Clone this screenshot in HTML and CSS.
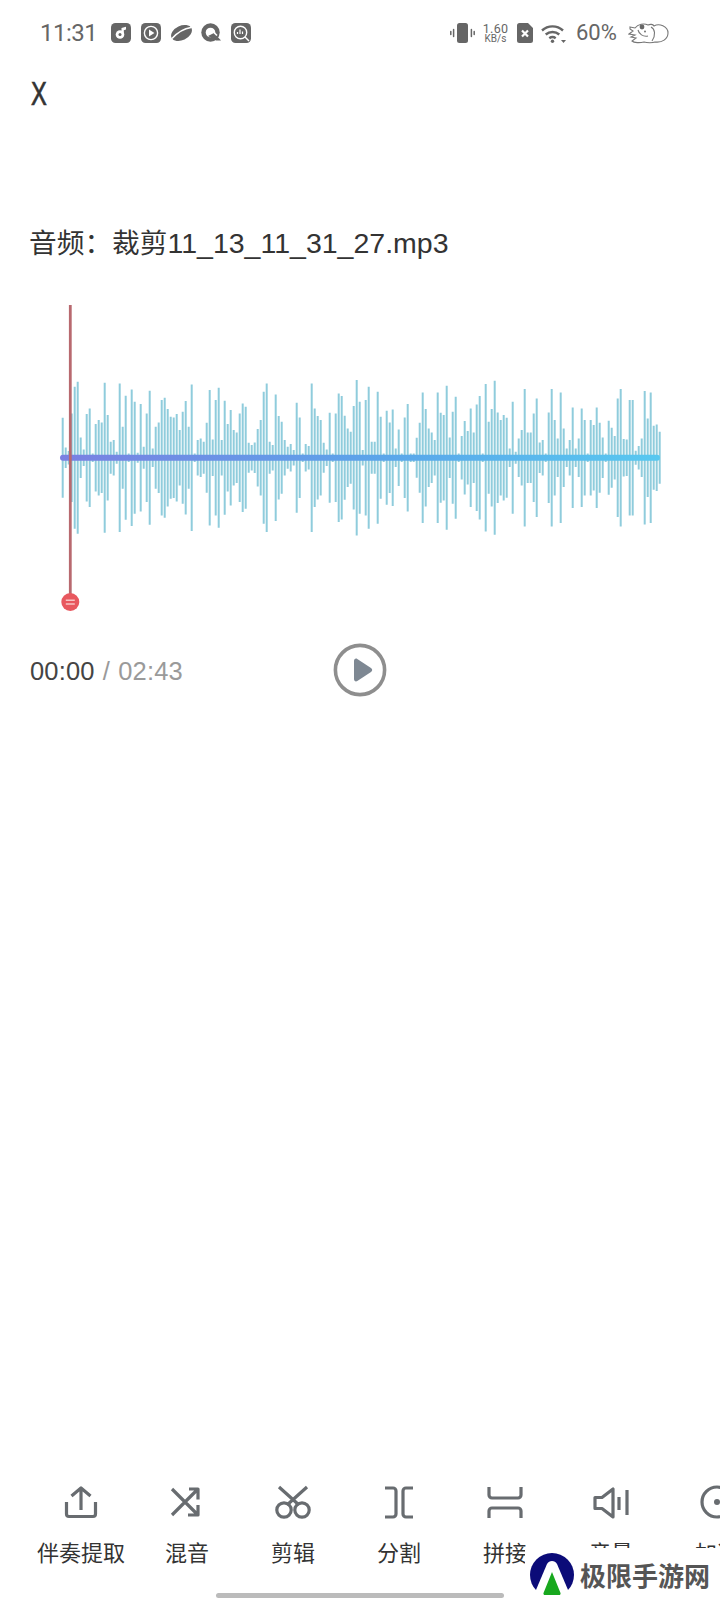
FILE: index.html
```html
<!DOCTYPE html>
<html lang="zh">
<head>
<meta charset="utf-8">
<title>音频</title>
<link rel="stylesheet" href="styles.css">
</head>
<body>
<div class="page">
  <header class="status">
    <div class="status-group">
      <span class="clock">11:31</span>
      <div class="app-icons">
        <svg class="app" viewBox="0 0 20 20"><rect width="20" height="20" rx="4.5" class="ink"/><circle cx="9" cy="11.5" r="4.300" class="cut"/><circle cx="9" cy="11.500" r="1.500" class="ink"/><path d="M10.500 8.500V5l4.500-1.200v2.800l-2.200.6v3z" class="cut"/></svg>
        <svg class="app" viewBox="0 0 20 20"><rect width="20" height="20" rx="4.5" class="ink"/><circle cx="10" cy="10" r="6.6" class="ring"/><path d="M8 6.6v6.8l5.4-3.4z" class="cut"/></svg>
        <svg class="app app-wide" viewBox="0 0 21 20"><ellipse cx="10.5" cy="10" rx="11" ry="7.200" transform="rotate(-25 10.5 10)" class="ink"/><path d="M1 15.500C7 9 13 5.500 20 4.500" class="slash"/></svg>
        <svg class="app" viewBox="0 0 20 20"><circle cx="9.5" cy="9.5" r="9.2" class="ink"/><circle cx="9.5" cy="9.5" r="4.8" class="cut"/><path d="M7 13l6-3 7 7.5h-5z" class="ink"/><path d="M12 8.5l4 4" class="slash"/></svg>
        <svg class="app" viewBox="0 0 20 20"><rect width="20" height="20" rx="4.5" class="ink"/><circle cx="9.5" cy="9.5" r="6.2" class="ring"/><path d="M14 14l4 4" class="ring"/><path d="M6.5 11V9M9 11V6.5M11.5 11V8.5" class="thin"/></svg>
      </div>
    </div>
    <div class="status-group status-right">
      <svg class="vibrate" viewBox="0 0 25 20"><rect x="7" width="11" height="20" rx="2.5" class="ink"/><path d="M3.6 6.5v7M.8 8.5v3M21.4 6.5v7M24.2 8.5v3" class="stroke"/></svg>
      <div class="speed"><span class="speed-num">1.60</span><span class="speed-unit">KB/s</span></div>
      <svg class="sim" viewBox="0 0 16 20"><path d="M2.5 0H11l5 5v12.5a2.500 2.500 0 0 1-2.500 2.500h-11A2.500 2.500 0 0 1 0 17.500v-15A2.500 2.500 0 0 1 2.500 0z" class="ink"/><path d="M5 7.500l6 6M11 7.500l-6 6" class="sim-x"/></svg>
      <svg class="wifi" viewBox="0 0 25 19"><path d="M1 6.500C7 1 16 1 22 6.500" class="wave-arc"/><path d="M4.700 10.500c4-3.400 9.600-3.400 13.600 0" class="wave-arc"/><path d="M8.300 14.200c2-1.500 4.400-1.500 6.400 0" class="wave-arc"/><circle cx="11.500" cy="17.300" r="1.700" class="ink"/><path d="M20 16h5l-2.500 3z" class="ink"/></svg>
      <span class="battery">60%</span>
      <svg class="mascot" viewBox="0 0 41 22"><path d="M2 5l5 1C10 2 16 1 20 3c2-1 5-1 6 1 5-3 14 0 14 7 0 6-6 10-13 9-2 1-8 1-11 0-4 1-10 1-12-1l4-3-5-1 4-2-6-1 4-3-3-2z" class="sketch"/><path d="M23 5c4 2 5 8 1 14M10 8c1 4 5 7 10 6" class="sketch"/><circle cx="14" cy="5" r="2.400" class="ink"/><circle cx="17" cy="9.500" r=".9" class="ink"/></svg>
    </div>
  </header>

  <div class="topbar"><span class="close">X</span></div>

  <h1 class="title">音频：裁剪<span class="title-latin">11_13_11_31_27.mp3</span></h1>

  <svg class="wave" viewBox="0 300 720 320">
    <defs>
      <linearGradient id="axis" x1="60" x2="660" y1="0" y2="0" gradientUnits="userSpaceOnUse">
        <stop offset="0" stop-color="#7a80e2"/>
        <stop offset=".55" stop-color="#5aa6ea"/>
        <stop offset="1" stop-color="#58c8f0"/>
      </linearGradient>
    </defs>
    <path id="bars" class="bars"/>
    <rect x="60" y="454.700" width="600" height="6" rx="3" fill="url(#axis)"/>
    <path d="M70.300 305V596" class="playhead"/>
    <circle cx="70.300" cy="602" r="9" class="handle"/>
    <path d="M65.800 600.300h9M65.800 604h9" class="handle-mark"/>
  </svg>

  <div class="controls">
    <div class="times"><span class="now">00:00</span><span class="total"> / 02:43</span></div>
    <svg class="play" viewBox="0 0 54 54"><circle cx="27" cy="27" r="24.600" class="play-ring"/><path d="M21 18c0-2 1.700-3 3.300-2l13.700 9c1.600 1 1.600 3 0 4l-13.700 9c-1.600 1-3.300 0-3.300-2z" class="play-tri"/></svg>
    <div></div>
  </div>

  <nav class="tools">
    <div class="tool">
      <svg class="tool-icon" viewBox="0 0 44 44"><path d="M7.500 22v12a2.500 2.500 0 0 0 2.500 2.500h24a2.500 2.500 0 0 0 2.500-2.500V22M22 30V9M12.500 16L22 8l9.500 8"/></svg>
      <span class="tool-label">伴奏提取</span>
    </div>
    <div class="tool">
      <svg class="tool-icon" viewBox="0 0 44 44"><path d="M7 35L33 9M24 9h9v10.500M7 9l26 26M33 25v10H23"/></svg>
      <span class="tool-label">混音</span>
    </div>
    <div class="tool">
      <svg class="tool-icon" viewBox="0 0 44 44"><circle cx="13" cy="30" r="7.200"/><circle cx="31" cy="30" r="7.200"/><path d="M8 7l20 18M36 7L16 25"/></svg>
      <span class="tool-label">剪辑</span>
    </div>
    <div class="tool">
      <svg class="tool-icon" viewBox="0 0 44 44"><path d="M8 8h8a3 3 0 0 1 3 3v23a3 3 0 0 1-3 3H8M36 8h-7a3 3 0 0 0-3 3v23a3 3 0 0 0 3 3h7"/></svg>
      <span class="tool-label">分割</span>
    </div>
    <div class="tool">
      <svg class="tool-icon" viewBox="0 0 44 44"><path d="M6 7v8a3 3 0 0 0 3 3h26a3 3 0 0 0 3-3V7M6 38v-7a3 3 0 0 1 3-3h26a3 3 0 0 1 3 3v7"/></svg>
      <span class="tool-label">拼接</span>
    </div>
    <div class="tool">
      <svg class="tool-icon" viewBox="0 0 44 44"><path d="M6 17.500h7L24 9v28l-11-8.500H6zM30 17v13M38 10v25"/></svg>
      <span class="tool-label">音量</span>
    </div>
    <div class="tool">
      <svg class="tool-icon" viewBox="0 0 44 44"><circle cx="22" cy="22" r="15"/><circle cx="22" cy="22" r="3" class="tool-dot"/></svg>
      <span class="tool-label">加速</span>
    </div>
  </nav>

  <div class="home-bar"></div>

  <div class="watermark">
    <svg class="wm-logo" viewBox="0 0 44 44"><circle cx="22" cy="22" r="22" fill="#0b0b78"/><path d="M3 44L17 11c2-4 8-4 10 0l14 33z" fill="#fff"/><path d="M22 19l8.500 21a1.500 1.500 0 0 1-1.500 2H15a1.500 1.500 0 0 1-1.500-2z" fill="#18a81e"/></svg>
    <span class="wm-text">极限手游网</span>
  </div>
</div>
<script src="waveform.js"></script>
</body>
</html>
```

FILE: styles.css
```css
* { box-sizing: border-box; }
html, body { margin: 0; padding: 0; background: #fff; }
.page {
  position: relative;
  width: 720px;
  height: 1600px;
  overflow: hidden;
  display: flex;
  flex-direction: column;
  font-family: "Liberation Sans", "Noto Sans CJK SC", sans-serif;
  color: #333;
}
.ink { fill: #666; }
.cut { fill: #fff; }
.ring { fill: none; stroke: #fff; stroke-width: 1.4; }
.thin { fill: none; stroke: #fff; stroke-width: 1.2; }
.slash { fill: none; stroke: #fff; stroke-width: 1.6; }
.stroke { fill: none; stroke: #666; stroke-width: 1.5; stroke-linecap: round; }

.status {
  height: 66px;
  padding: 0 51px 0 40px;
  display: flex;
  align-items: center;
  justify-content: space-between;
  color: #666;
}
.status-group { display: flex; align-items: center; }
.clock { font: 400 24px/1 Roboto, sans-serif; letter-spacing: -.5px; width: 71px; }
.app-icons { display: flex; align-items: center; gap: 10px; }
.app { width: 20px; height: 20px; display: block; }
.app-wide { width: 21px; margin-right: -1px; }
.vibrate { width: 25px; height: 20px; display: block; margin-right: 8px; }
.speed { display: flex; flex-direction: column; width: 25px; margin-right: 9px; align-items: center; font-family: Roboto, sans-serif; font-weight: 400; }
.speed-num { font-size: 12.500px; line-height: 11px; letter-spacing: .3px; }
.speed-unit { font-size: 10px; line-height: 10px; }
.sim { width: 16px; height: 20px; display: block; margin-right: 8px; }
.sim-x { fill: none; stroke: #fff; stroke-width: 2.200; }
.wifi { width: 25px; height: 19px; display: block; margin-right: 10px; }
.wave-arc { fill: none; stroke: #666; stroke-width: 2.400; }
.battery { font: 400 22px/1 Roboto, sans-serif; width: 52px; }
.mascot { width: 41px; height: 22px; display: block; }
.sketch { fill: none; stroke: #777; stroke-width: 1.100; }

.topbar { height: 54px; padding-left: 31px; display: flex; align-items: center; }
.close {
  display: block;
  font-size: 33px;
  line-height: 1;
  color: #333;
  -webkit-text-stroke: .7px #333;
  transform: scaleX(.72);
  transform-origin: left center;
}

.title {
  margin: 103px 0 0 29px;
  height: 40px;
  flex: none;
  font-size: 27.700px;
  font-weight: 400;
  line-height: 40px;
  color: #333;
  white-space: nowrap;
}
.title-latin { font-size: 28.500px; }

.wave { display: block; width: 720px; height: 320px; margin-top: 37px; flex: none; }
.bars { fill: none; stroke: #8fccdc; stroke-width: 2; }
.playhead { stroke: #b8696f; stroke-width: 2.800; fill: none; }
.handle { fill: #e8585f; }
.handle-mark { stroke: #f7c4c4; stroke-width: 1.500; fill: none; }

.controls {
  height: 60px;
  margin-top: 20px;
  padding: 0 30px;
  display: grid;
  grid-template-columns: 1fr 54px 1fr;
  align-items: center;
}
.times { font-size: 25.500px; line-height: 1; white-space: nowrap; word-spacing: 1px; letter-spacing: .15px; padding-top: 4px; }
.now { color: #444; }
.total { color: #9a9a9a; }
.play { width: 54px; height: 54px; display: block; }
.play-ring { fill: none; stroke: #8e8e8e; stroke-width: 3.600; }
.play-tri { fill: #7e8893; }

.tools {
  margin-top: auto;
  padding-left: 28px;
  display: flex;
  flex: none;
}
.tool {
  flex: 0 0 106px;
  display: flex;
  flex-direction: column;
  align-items: center;
  gap: 15px;
}
.tool-icon {
  width: 44px;
  height: 44px;
  display: block;
  fill: none;
  stroke: #686c70;
  stroke-width: 3.200;
  stroke-linejoin: round;
}
.tool-dot { fill: #686c70; stroke: none; }
.tool-label { font-size: 22px; line-height: 30px; color: #333; white-space: nowrap; }

.home-bar {
  flex: none;
  width: 288px;
  height: 5px;
  margin: 24px auto 2px;
  border-radius: 3px;
  background: #bbb;
}

.watermark {
  position: absolute;
  left: 525px;
  right: 0;
  top: 1548px;
  bottom: 0;
  background: #fff;
  display: flex;
  align-items: center;
  gap: 6px;
  padding: 2px 0 0 5px;
}
.wm-logo { width: 44px; height: 44px; display: block; flex: none; }
.wm-text {
  font-family: "Noto Sans CJK SC", sans-serif;
  font-weight: 700;
  font-size: 26px;
  line-height: 1;
  color: #555;
  white-space: nowrap;
}
```

FILE: waveform.js
```js
// Half-height of each waveform bar, in thirds of a pixel; bars are 3px apart.
var LEVELS = [
  120,31,20,133,213,228,61,25,131,148,13,101,113,106,225,128,48,53,18,223,93,186,13,205,168,15,161,33,133,201,28,93,
  106,173,180,146,123,121,131,83,138,170,93,220,13,53,58,48,105,203,55,173,210,53,171,101,143,83,76,133,163,153,45,38,
  46,86,113,198,223,48,38,190,125,
  108,53,33,41,23,165,121,13,41,35,223,148,125,113,45,25,135,13,133,193,185,126,88,78,155,233,168,23,173,213,48,48,
  198,123,13,141,106,145,28,85,13,121,161,
  13,13,60,105,196,146,88,76,53,196,135,128,216,61,138,183,13,65,110,80,148,76,160,185,13,221,108,146,231,136,113,128,
  120,28,168,18,58,83,206,76,76,133,178,46,53,13,136,206,113,58,196,88,28,53,151,28,58,148,113,13,113,98,151,105,61,
  13,111,90,65,178,206,56,55,173,173,21,35,58,200,118,196,96,100,78
];
var CENTER = 457.7;
var d = LEVELS.map(function (level, i) {
  var x = (62.7 + i * 3).toFixed(1);
  var half = level / 3;
  return "M" + x + " " + (CENTER - half).toFixed(1) + "V" + (CENTER + half).toFixed(1);
}).join("");
document.getElementById("bars").setAttribute("d", d);
```
